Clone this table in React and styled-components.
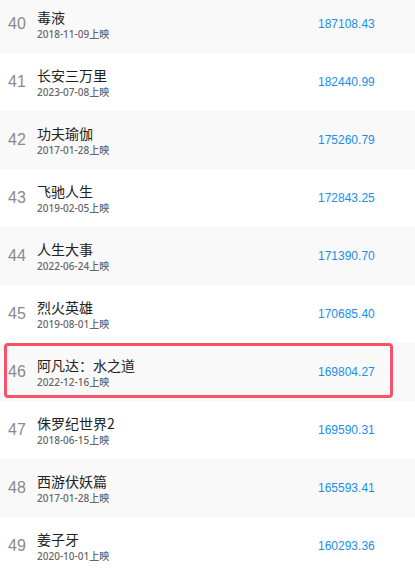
import React from 'react'
import styled, { createGlobalStyle } from 'styled-components'

const GlobalStyle = createGlobalStyle`
  html, body {
    margin: 0;
    padding: 0;
    background: #fff;
    font-family: "Noto Sans CJK SC", "Noto Sans", sans-serif;
  }
`

const List = styled.ul`
  list-style: none;
  margin: -5px 0 0;
  padding: 0;
  width: 415px;
`

const Row = styled.li`
  position: relative;
  display: flex;
  align-items: center;
  height: 58px;
  background: ${({ $shaded }) => ($shaded ? '#f9f9f9' : '#fff')};
`

const Rank = styled.span`
  width: 29px;
  padding-left: 8px;
  font-family: "Liberation Sans", Arial, sans-serif;
  font-size: 16px;
  color: #8a8a8a;
`

const Info = styled.div`
  flex: 1;
  display: flex;
  flex-direction: column;
`

const Title = styled.span`
  font-size: 14px;
  line-height: 18px;
  color: #222;
`

const Release = styled.span`
  margin-top: 1px;
  font-family: "Noto Sans", "Noto Sans CJK SC", sans-serif;
  font-size: 10px;
  line-height: 14px;
  font-weight: 500;
  color: #666;
`

const Gross = styled.span`
  width: 97px;
  font-family: "Liberation Sans", Arial, sans-serif;
  font-size: 12px;
  color: #1a8ee6;
`

const Highlight = styled.div`
  position: absolute;
  left: 4px;
  top: 0;
  width: 389px;
  height: 55px;
  box-sizing: border-box;
  border: 3px solid #f7526a;
  border-radius: 4px;
  pointer-events: none;
`

const movies = [
  { rank: 40, title: '毒液', date: '2018-11-09', gross: '187108.43' },
  { rank: 41, title: '长安三万里', date: '2023-07-08', gross: '182440.99' },
  { rank: 42, title: '功夫瑜伽', date: '2017-01-28', gross: '175260.79' },
  { rank: 43, title: '飞驰人生', date: '2019-02-05', gross: '172843.25' },
  { rank: 44, title: '人生大事', date: '2022-06-24', gross: '171390.70' },
  { rank: 45, title: '烈火英雄', date: '2019-08-01', gross: '170685.40' },
  { rank: 46, title: '阿凡达：水之道', date: '2022-12-16', gross: '169804.27', marked: true },
  { rank: 47, title: '侏罗纪世界2', date: '2018-06-15', gross: '169590.31' },
  { rank: 48, title: '西游伏妖篇', date: '2017-01-28', gross: '165593.41' },
  { rank: 49, title: '姜子牙', date: '2020-10-01', gross: '160293.36' },
]

export default function App() {
  return (
    <>
      <GlobalStyle />
      <List>
        {movies.map((m) => (
          <Row key={m.rank} $shaded={m.rank % 2 === 0}>
            <Rank>{m.rank}</Rank>
            <Info>
              <Title>{m.title}</Title>
              <Release>{m.date}上映</Release>
            </Info>
            <Gross>{m.gross}</Gross>
            {m.marked && <Highlight />}
          </Row>
        ))}
      </List>
    </>
  )
}
